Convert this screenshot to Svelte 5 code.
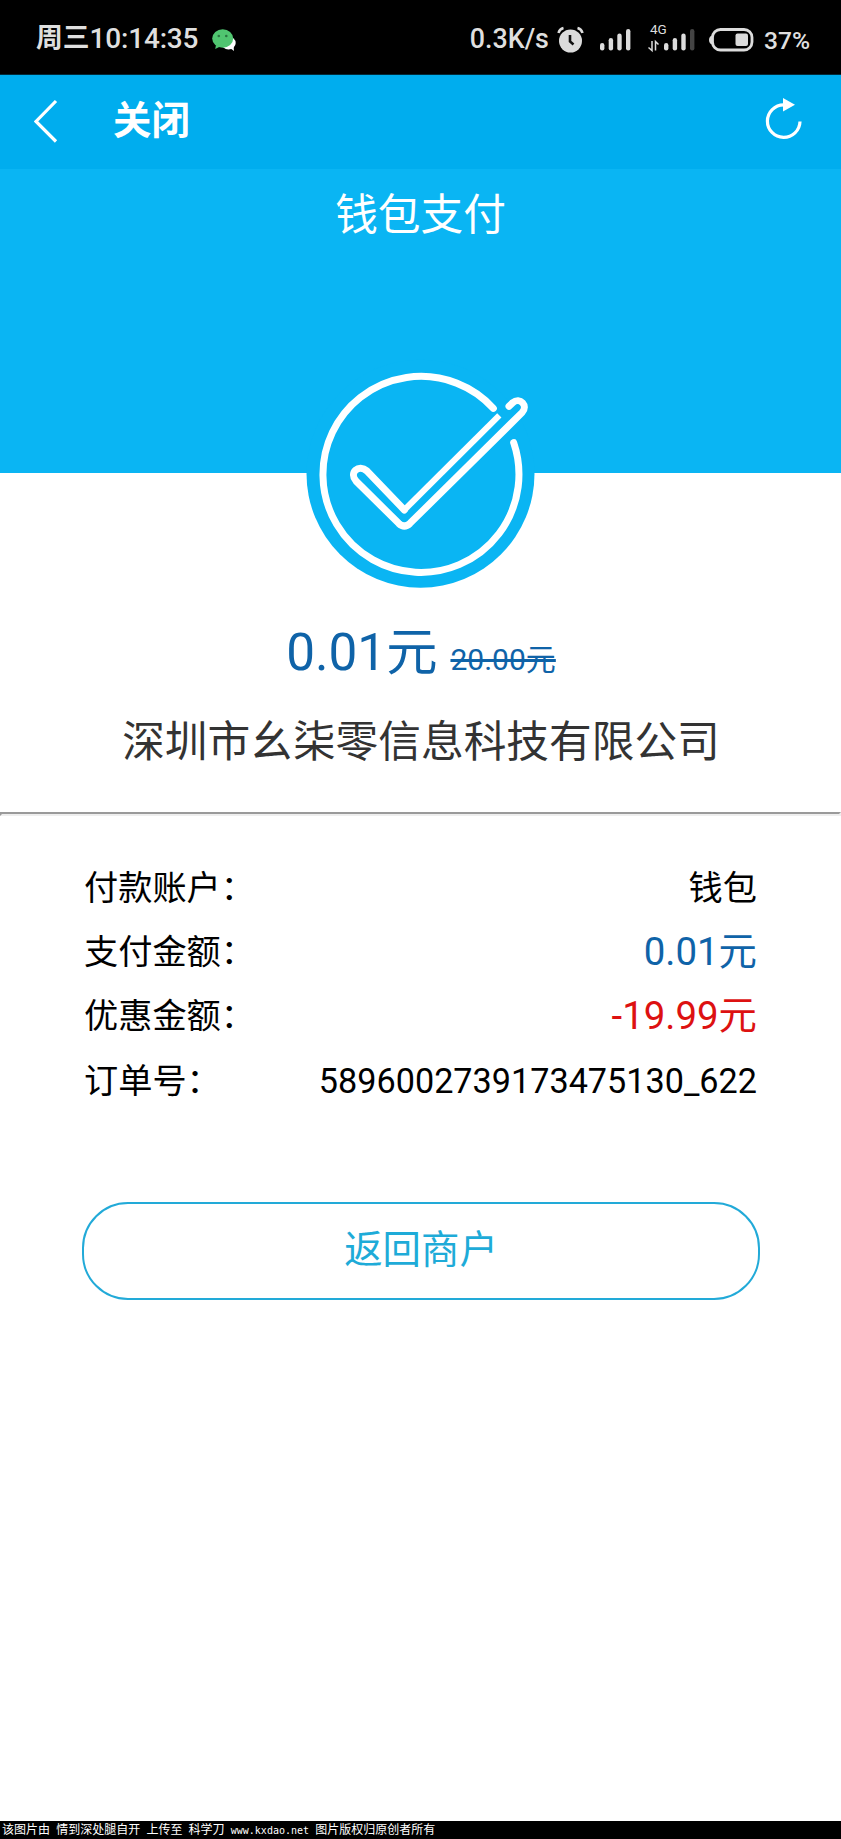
<script lang="ts">
  type Row = { label: string; value: string; kind?: string };

  const rows: Row[] = [
    { label: '付款账户：', value: '钱包' },
    { label: '支付金额：', value: '0.01元', kind: 'pay' },
    { label: '优惠金额：', value: '-19.99元', kind: 'off' },
    { label: '订单号：', value: '5896002739173475130_622' },
  ];
</script>

<div class="page">
  <div class="status">
    <span class="day">周三</span><span class="time">10:14:35</span>
    <svg class="wechat" width="24" height="23" viewBox="0 0 24 23">
      <ellipse cx="16.500" cy="14" rx="7.200" ry="6.500" fill="#fff" />
      <path d="M18 19l4 3-.5-5z" fill="#fff" />
      <ellipse cx="10.700" cy="9.500" rx="10.500" ry="9.300" fill="#50c570" />
      <path d="M4 16l-.8 4 5-2.500z" fill="#50c570" />
      <circle cx="6.800" cy="7" r="1.300" fill="#2a7440" />
      <circle cx="14.300" cy="7" r="1.300" fill="#2a7440" />
    </svg>
    <span class="speed">0.3K/s</span>
    <!-- alarm, both signals and battery -->
    <svg class="icons" width="200" height="36" viewBox="0 0 200 36" fill="#dcdcdc">
      <circle cx="13.500" cy="21" r="11.500" />
      <path d="M1.500 13q1-4 5-5M20.500 8q4 1 5 5" fill="none" stroke="#dcdcdc" stroke-width="2.500" />
      <path d="M13 15v6.500l3.500 3" fill="none" stroke="#111" stroke-width="2.600" />
      <rect x="43" y="23" width="4.400" height="7.500" rx="2.200" />
      <rect x="51.700" y="18" width="4.400" height="12.500" rx="2.200" />
      <rect x="60.300" y="13.500" width="4.400" height="17" rx="2.200" />
      <rect x="69" y="9" width="4.400" height="21.500" rx="2.200" />
      <text x="93" y="14" font-size="13.500">4G</text>
      <path d="M95 21v9.500l-3.500-3M98.500 30.500V21.500l3 3" fill="none" stroke="#dcdcdc" stroke-width="1.500" />
      <rect x="107" y="23" width="4.400" height="7.500" rx="2.200" />
      <rect x="115.700" y="18" width="4.400" height="12.500" rx="2.200" />
      <rect x="124.300" y="13.500" width="4.400" height="17" rx="2.200" />
      <rect x="133" y="9" width="4.400" height="21.500" rx="2.200" fill="#444" />
      <rect x="155.500" y="9.500" width="39.500" height="20.500" rx="8" fill="none" stroke="#dcdcdc" stroke-width="2.800" />
      <path d="M156 15q-4 1-4 5t4 5z" />
      <rect x="178.500" y="13.500" width="12.500" height="12.500" rx="2" />
    </svg>
    <span class="percent">37%</span>
  </div>

  <div class="nav">
    <svg class="back" width="26" height="46" viewBox="0 0 26 46">
      <path d="M22 3L2 23.500 22 43.500" fill="none" stroke="#fff" stroke-width="3.200" />
    </svg>
    <span class="close">关闭</span>
    <svg class="reload" width="40" height="44" viewBox="0 0 40 44">
      <path d="M35 25.500A16.300 16.300 0 1 1 18.700 8.800" fill="none" stroke="#fff" stroke-width="3.200" />
      <path d="M18 2l12 6.800L18 15.500z" fill="#fff" />
    </svg>
  </div>

  <div class="hero">
    <h1>钱包支付</h1>
    <svg class="badge" width="260" height="250" viewBox="3 0 780 750">
      <circle cx="391.500" cy="371" r="342" fill="#0ab5f3" />
      <g fill="none" stroke="#fff" stroke-width="21" stroke-linecap="round">
        <path d="M610 175A294 294 0 1 0 671 278" />
        <path d="M657 169L668 158C690 140 716 167 696 188L360 520Q343 536 326 520L198 393C176 368 206 341 231 363L343 480" />
        <path d="M343 480L628 196" stroke-linecap="butt" stroke-width="18" />
      </g>
    </svg>
  </div>

  <div class="summary">
    <div class="amount">0.01元<del>20.00元</del></div>
    <div class="company">深圳市幺柒零信息科技有限公司</div>
  </div>
  <hr />

  <div class="details">
    {#each rows as row}
      <div class="row">
        <span>{row.label}</span>
        <span class={row.kind}>{row.value}</span>
      </div>
    {/each}
  </div>

  <button>返回商户</button>

  <div class="footer">该图片由 情到深处腿自开 上传至 科学刀 <span>www.kxdao.net</span> 图片版权归原创者所有</div>
</div>

<style>
  .page {
    display: flex;
    flex-direction: column;
    height: 1839px;
    background: #fff;
    color: #000;
    font-family: Roboto, "Noto Sans CJK SC", sans-serif;
    white-space: nowrap;
    overflow: hidden;
  }

  .status {
    display: flex;
    align-items: center;
    flex: none;
    height: 75px;
    padding: 0 31px 0 36px;
    box-sizing: border-box;
    background: #000;
    color: #dfdfdf;
    border-bottom: 1px solid #002b3b;
    line-height: 40px;
  }
  .day {
    padding-top: 2px;
    font-size: 26.8px;
    font-weight: 700;
  }
  .time {
    padding-top: 4px;
    font-size: 28px;
    font-weight: 500;
    letter-spacing: -0.2px;
  }
  .wechat {
    margin: 6px 0 0 14px;
  }
  .speed {
    margin-left: auto;
    padding-top: 4px;
    font-size: 26.8px;
    font-weight: 500;
  }
  .icons {
    margin: 1px 0 0 8px;
  }
  .percent {
    margin-left: 7px;
    padding-top: 7px;
    font-size: 24.6px;
    font-weight: 500;
  }

  .nav {
    display: flex;
    align-items: center;
    flex: none;
    height: 94px;
    padding: 0 36px 0 34px;
    box-sizing: border-box;
    background: #00adee;
    color: #fff;
  }
  .back {
    margin-top: -3px;
  }
  .close {
    margin: -2px 0 0 53px;
    font-size: 38.4px;
    font-weight: 700;
    line-height: 60px;
  }
  .reload {
    margin: -9px 0 0 auto;
  }

  .hero {
    display: flex;
    flex-direction: column;
    align-items: center;
    flex: none;
    height: 304px;
    background: #0ab5f3;
  }
  h1 {
    margin: 16px 0 0;
    color: #fff;
    font-size: 42.7px;
    font-weight: 400;
    line-height: 60px;
  }
  .badge {
    flex: none;
    margin-top: 105px;
  }

  .summary {
    flex: none;
    height: 339px;
    text-align: center;
  }
  .amount {
    padding: 144px 0 0 1px;
    color: #0f63a8;
    font-size: 51.300px;
    line-height: 72px;
  }
  del {
    margin-left: 13px;
    font-size: 30px;
  }
  .company {
    margin-top: 14px;
    padding-left: 1px;
    color: #333;
    font-size: 42.7px;
    line-height: 64px;
  }
  hr {
    flex: none;
    align-self: stretch;
    height: 0;
    margin: 0;
    border: 2px solid #9a9a9a;
    border-right-color: #eee;
    border-bottom-color: #eee;
  }

  .details {
    padding: 40px 84px 0;
  }
  .row {
    display: flex;
    justify-content: space-between;
    height: 64.2px;
    font-size: 34.200px;
    line-height: 64px;
  }
  .pay,
  .off {
    font-size: 38.4px;
  }
  .pay {
    color: #0f63a8;
  }
  .off {
    color: #dd1111;
  }

  button {
    flex: none;
    height: 98px;
    margin: 89px 81px 0 82px;
    padding: 0 0 10px;
    border: 2px solid #22aad8;
    border-radius: 46px;
    background: none;
    color: #1eabd8;
    font-family: inherit;
    font-size: 38.4px;
  }

  .footer {
    height: 18px;
    margin-top: auto;
    padding-left: 2px;
    background: #000;
    color: #fff;
    font-family: "Noto Sans CJK SC", sans-serif;
    font-size: 12px;
    line-height: 16px;
    word-spacing: 3.5px;
  }
  .footer span {
    font-family: "DejaVu Sans Mono", monospace;
    font-size: 10px;
  }
</style>
